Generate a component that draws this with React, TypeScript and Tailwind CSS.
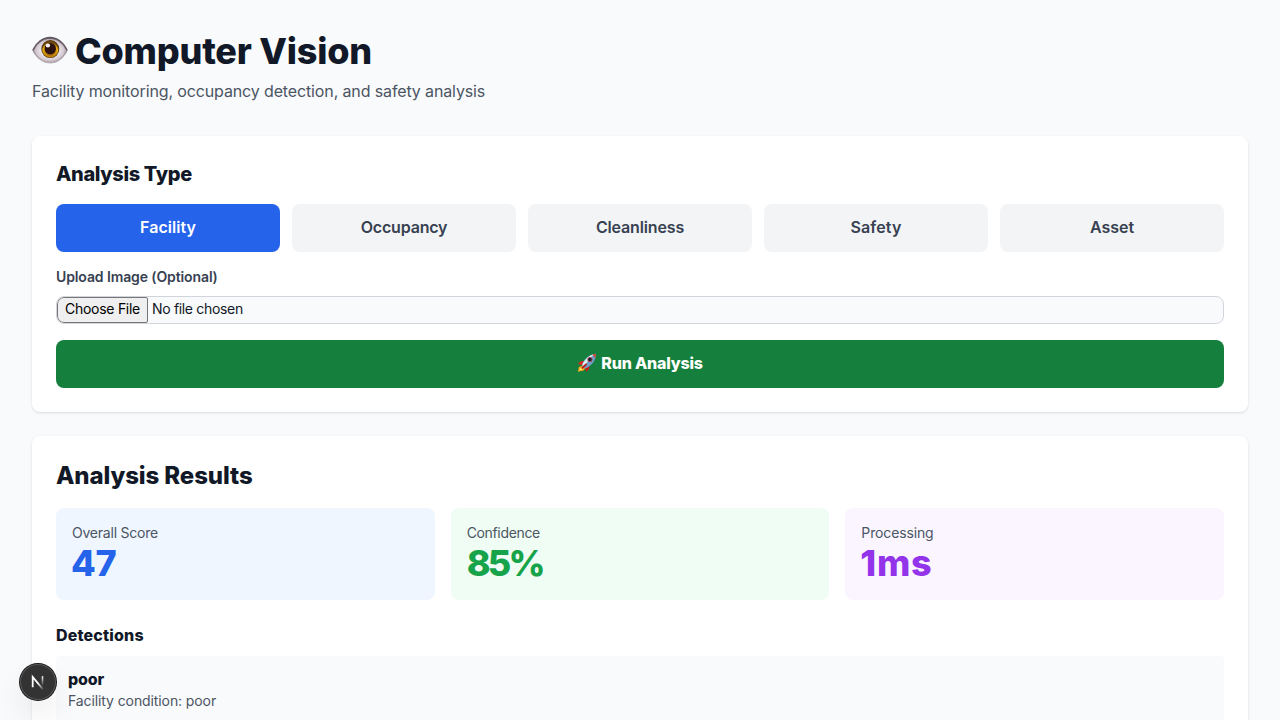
const analysisTypes = [
  { name: "Facility", active: true, tracking: "tracking-[0.04px]" },
  { name: "Occupancy", active: false, tracking: "tracking-[-0.18px]" },
  { name: "Cleanliness", active: false, tracking: "tracking-[-0.14px]" },
  { name: "Safety", active: false, tracking: "tracking-[0.1px]" },
  { name: "Asset", active: false, tracking: "tracking-[-0.02px]" },
];

const metrics = [
  { label: "Overall Score", value: "47", box: "bg-[#eff6ff]", color: "text-[#2563eb]", labelTracking: "tracking-[-0.22px]", tracking: "-ml-px tracking-[-0.4px]" },
  { label: "Confidence", value: "85%", box: "bg-[#f0fdf4]", color: "text-[#16a34a]", labelTracking: "tracking-[-0.34px]", tracking: "tracking-[-2.8px]" },
  { label: "Processing", value: "1ms", box: "bg-[#faf5ff]", color: "text-[#9333ea]", labelTracking: "tracking-[-0.14px]", tracking: "-ml-px tracking-[0.7px]" },
];

function EyeIcon() {
  return (
    <svg className="block h-9 w-9 shrink-0" viewBox="0 0 36 36" aria-hidden="true">
      <defs>
        <radialGradient id="eye-white" cx="50%" cy="50%" r="55%">
          <stop offset="0.4" stopColor="#f1eff2" />
          <stop offset="0.75" stopColor="#d6cbd3" />
          <stop offset="1" stopColor="#94858f" />
        </radialGradient>
        <radialGradient id="eye-iris" cx="50%" cy="65%" r="55%">
          <stop offset="0" stopColor="#6b3608" />
          <stop offset="0.6" stopColor="#c98a0b" />
          <stop offset="0.82" stopColor="#e8b010" />
          <stop offset="1" stopColor="#6a430f" />
        </radialGradient>
        <linearGradient id="eye-lid" x1="0" y1="0" x2="0" y2="1">
          <stop offset="0" stopColor="#5b545c" />
          <stop offset="1" stopColor="#bdb4bc" />
        </linearGradient>
      </defs>
      <g transform="translate(0 0.6)">
        <path d="M.2 16.600C4.500 8 10.700 3.100 18 3.100S31.500 8 35.800 16.600C31.500 25 25.700 29.900 18.300 29.900S4.500 25 .2 16.600Z" fill="url(#eye-lid)" />
        <path d="M1.600 16.900C5.500 9 11 5.200 18 5.200S30.500 9 34.400 16.900C30.300 24.600 25 28.700 18.200 28.700S5.700 24.600 1.600 16.900Z" fill="url(#eye-white)" />
        <path d="M1 16.300C5 8 11 4.200 18 4.200S31 8 35 16.300" fill="none" stroke="#655c65" strokeWidth="1.300" />
        <circle cx="18.300" cy="15.500" r="9" fill="#51310e" />
        <circle cx="18.300" cy="15.500" r="8.300" fill="url(#eye-iris)" />
        <circle cx="18.300" cy="15" r="5.700" fill="#2b1210" />
        <ellipse cx="15.900" cy="11.900" rx="2.200" ry="2" fill="#fff" opacity="0.95" />
      </g>
    </svg>
  );
}

function RocketIcon() {
  return (
    <svg className="block h-5 w-5 shrink-0" viewBox="0 0 20 20" aria-hidden="true">
      <path d="M6.200 12.200 1.800 13.900.9 18.700l5.800-1.200 2.200-3.400Z" fill="#f3a41b" />
      <path d="M5.800 13.500 3 15.200 2.200 17.600l3-.8 2-2Z" fill="#ffe85a" />
      <path d="M8.300 8.200C5.200 7.500 2.400 8.300 1 10.900l5 1.500Z" fill="#e0281f" />
      <path d="M12.300 11.500c.6 3-.2 5.500-3.100 7.300l-1.400-4.600Z" fill="#d01818" />
      <path d="M4.800 12.300C6.800 6.500 11.500 1.800 18.800.7c.3 6.900-4.300 12-10.600 14.900Z" fill="#6f9fc8" />
      <path d="M5.200 11.900C7.500 6.500 11.500 2.500 17 1.200 13.500 4.500 10 9 7 13.500Z" fill="#d9edf7" />
      <path d="M15.300 1.600 18.800.7c.2 1.400 0 2.900-.5 4.200Z" fill="#d8473b" />
      <circle cx="12.900" cy="6.500" r="2.500" fill="#b6383c" />
      <circle cx="12.900" cy="6.500" r="1.700" fill="#14243a" />
      <path d="m5.300 15 3.800-3.600" stroke="#b61d18" strokeWidth="1.800" strokeLinecap="round" />
    </svg>
  );
}

function DevBadge() {
  return (
    <button
      type="button"
      aria-label="Open dev tools"
      className="fixed bottom-5 left-5 flex h-9 w-9 items-center justify-center rounded-full bg-[#333333] shadow-[0_0_0_1px_#171717,inset_0_0_0_1px_#565656,0_16px_32px_-8px_rgba(0,0,0,0.24)]"
    >
      <svg className="h-4 w-4" viewBox="0 0 16 16" fill="none" aria-hidden="true">
        <defs>
          <linearGradient id="badge-stem" x1="11.500" y1="2" x2="11.500" y2="12" gradientUnits="userSpaceOnUse">
            <stop stopColor="#fff" />
            <stop offset="1" stopColor="#fff" stopOpacity="0" />
          </linearGradient>
          <linearGradient id="badge-diagonal" x1="8" y1="9" x2="13.500" y2="15" gradientUnits="userSpaceOnUse">
            <stop stopColor="#fff" />
            <stop offset="1" stopColor="#fff" stopOpacity="0.1" />
          </linearGradient>
        </defs>
        <path d="M2.700 13.300V3L13 15.300" stroke="url(#badge-diagonal)" strokeWidth="1.800" />
        <path d="M12.500 2.200v10" stroke="url(#badge-stem)" strokeWidth="1.600" />
      </svg>
    </button>
  );
}

export default function App() {
  return (
    <div className="h-screen overflow-hidden bg-[#f9fafb] p-8 font-['Inter','Roboto',sans-serif] text-[#111827]">
      <header className="mb-8">
        <h1 className="-mt-px mb-2 flex items-center gap-[7px] text-4xl font-extrabold tracking-[-0.22px]">
          <EyeIcon />
          <span>Computer Vision</span>
        </h1>
        <p className="mb-[33px] tracking-[-0.13px] text-[#4b5563]">
          Facility monitoring, occupancy detection, and safety analysis
        </p>
      </header>

      <section className="mb-6 rounded-lg bg-white p-6 shadow-[0_1px_3px_rgba(0,0,0,0.1),0_1px_2px_-1px_rgba(0,0,0,0.1)]">
        <h2 className="mb-4 text-xl font-extrabold tracking-[-0.36px]">Analysis Type</h2>
        <div className="mb-4 grid grid-cols-5 gap-3">
          {analysisTypes.map((type) => (
            <button
              key={type.name}
              type="button"
              className={`h-12 rounded-lg pb-0.5 font-semibold ${type.tracking} ${
                type.active ? "bg-[#2563eb] text-white" : "bg-[#f3f4f6] text-[#374151]"
              }`}
            >
              {type.name}
            </button>
          ))}
        </div>

        <p className="-mt-px mb-[9px] text-sm font-semibold tracking-[-0.11px] text-[#374151]">Upload Image (Optional)</p>
        <div className="mb-4 flex h-7 items-stretch overflow-hidden rounded-lg border border-[#d1d5db] bg-[#f9fafb] text-sm">
          <button
            type="button"
            className="w-[91px] shrink-0 rounded-l-[7px] rounded-r-[2px] border border-[#767676] bg-[#efefef] pb-0.5 text-center leading-[22px] tracking-[-0.27px] text-black"
          >
            Choose File
          </button>
          <span className="ml-1 leading-6 tracking-[-0.33px]">No file chosen</span>
        </div>

        <button
          type="button"
          className="flex h-12 w-full items-center justify-center gap-1 rounded-lg bg-[#15803d] pb-0.5 font-extrabold tracking-[-0.2px] text-white"
        >
          <RocketIcon />
          <span>Run Analysis</span>
        </button>
      </section>

      <section className="rounded-lg bg-white p-6 shadow-[0_1px_3px_rgba(0,0,0,0.1),0_1px_2px_-1px_rgba(0,0,0,0.1)]">
        <h2 className="mb-4 text-2xl font-extrabold tracking-[-0.11px]">Analysis Results</h2>
        <div className="mb-6 grid grid-cols-3 gap-4">
          {metrics.map((metric) => (
            <div key={metric.label} className={`rounded-lg px-4 pt-[15px] pb-[17px] ${metric.box}`}>
              <p className={`text-sm text-[#4b5563] ${metric.labelTracking}`}>{metric.label}</p>
              <p className={`text-4xl font-extrabold ${metric.color} ${metric.tracking}`}>{metric.value}</p>
            </div>
          ))}
        </div>

        <h3 className="-mt-px mb-[9px] font-extrabold tracking-[0.16px]">Detections</h3>
        <div className="rounded bg-[#f9fafb] px-3 pt-[11px] pb-[13px]">
          <p className="font-extrabold tracking-[-0.2px]">poor</p>
          <p className="text-sm tracking-[-0.1px] text-[#4b5563]">Facility condition: poor</p>
        </div>
      </section>

      <DevBadge />
    </div>
  );
}
